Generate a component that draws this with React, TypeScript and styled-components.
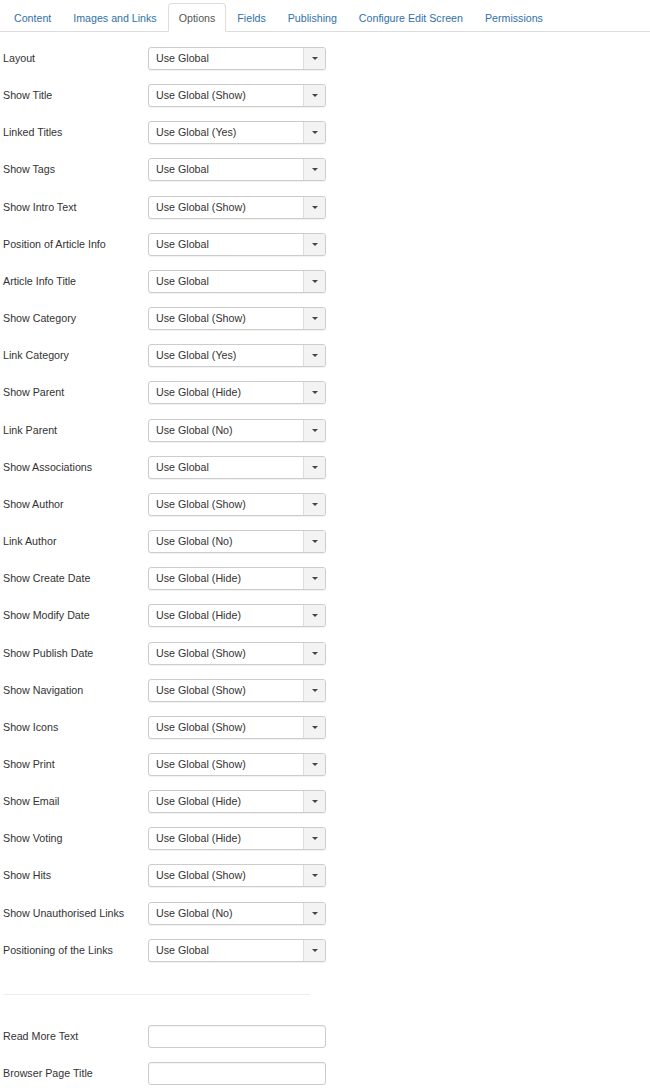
import React from "react";
import styled, { createGlobalStyle } from "styled-components";

const Global = createGlobalStyle`
  html, body { margin: 0; padding: 0; background: #fff; }
  body { font-family: "Liberation Sans", Arial, sans-serif; color: #333; }
  * { box-sizing: border-box; }
`;

const Page = styled.div`
  width: 650px;
  padding-top: 3px;
`;

const Tabs = styled.ul`
  display: flex;
  list-style: none;
  margin: 0;
  padding: 0 0 0 3px;
  border-bottom: 1px solid #ddd;
`;

const Tab = styled.li<{ $active?: boolean }>`
  margin-bottom: -1px;
  padding: 0 10px;
  height: 29px;
  line-height: 28px;
  font-size: 10.65px;
  border: 1px solid ${(p) => (p.$active ? "#ddd" : "transparent")};
  border-bottom-color: ${(p) => (p.$active ? "#fff" : "transparent")};
  border-radius: 4px 4px 0 0;
  background: ${(p) => (p.$active ? "#fff" : "transparent")};
  color: ${(p) => (p.$active ? "#555" : "#3071a9")};
  cursor: pointer;
`;

const Body = styled.div`
  padding-left: 3px;
`;

const Form = styled.div<{ $top?: number }>`
  display: grid;
  grid-template-columns: 145px 178px;
  row-gap: 14.17px;
  padding-top: ${(p) => p.$top ?? 15}px;
`;

const Label = styled.label`
  font-size: 10.7px;
  line-height: 23px;
  color: #333;
`;

const Select = styled.div`
  display: flex;
  height: 23px;
  border: 1px solid #ccc;
  border-radius: 3px;
  box-shadow: 0 1px 1px rgba(0, 0, 0, 0.06);
  background: #fff;
  overflow: hidden;
`;

const SelectValue = styled.span`
  flex: 1;
  padding-left: 7px;
  font-size: 10.7px;
  line-height: 21px;
  color: #333;
`;

const SelectButton = styled.span`
  width: 22px;
  border-left: 1px solid #ddd;
  background: #f3f3f3;
  display: flex;
  align-items: center;
  justify-content: center;
`;

const Caret = styled.span`
  width: 0;
  height: 0;
  border-left: 3px solid transparent;
  border-right: 3px solid transparent;
  border-top: 3px solid #444;
`;

const Separator = styled.hr`
  border: 0;
  border-top: 1px solid #eee;
  width: 307px;
  margin: 32px 0 30px;
`;

const TextInput = styled.input`
  height: 23px;
  width: 178px;
  border: 1px solid #ccc;
  border-radius: 3px;
  box-shadow: inset 0 1px 1px rgba(0, 0, 0, 0.05);
  padding: 0 6px;
  font: inherit;
  font-size: 10.7px;
`;

const tabs = [
  "Content",
  "Images and Links",
  "Options",
  "Fields",
  "Publishing",
  "Configure Edit Screen",
  "Permissions",
];

const rows: [string, string][] = [
  ["Layout", "Use Global"],
  ["Show Title", "Use Global (Show)"],
  ["Linked Titles", "Use Global (Yes)"],
  ["Show Tags", "Use Global"],
  ["Show Intro Text", "Use Global (Show)"],
  ["Position of Article Info", "Use Global"],
  ["Article Info Title", "Use Global"],
  ["Show Category", "Use Global (Show)"],
  ["Link Category", "Use Global (Yes)"],
  ["Show Parent", "Use Global (Hide)"],
  ["Link Parent", "Use Global (No)"],
  ["Show Associations", "Use Global"],
  ["Show Author", "Use Global (Show)"],
  ["Link Author", "Use Global (No)"],
  ["Show Create Date", "Use Global (Hide)"],
  ["Show Modify Date", "Use Global (Hide)"],
  ["Show Publish Date", "Use Global (Show)"],
  ["Show Navigation", "Use Global (Show)"],
  ["Show Icons", "Use Global (Show)"],
  ["Show Print", "Use Global (Show)"],
  ["Show Email", "Use Global (Hide)"],
  ["Show Voting", "Use Global (Hide)"],
  ["Show Hits", "Use Global (Show)"],
  ["Show Unauthorised Links", "Use Global (No)"],
  ["Positioning of the Links", "Use Global"],
];

export default function App() {
  return (
    <Page>
      <Global />
      <Tabs>
        {tabs.map((t) => (
          <Tab key={t} $active={t === "Options"}>
            {t}
          </Tab>
        ))}
      </Tabs>
      <Body>
        <Form>
          {rows.map(([l, v]) => (
            <React.Fragment key={l}>
              <Label>{l}</Label>
              <Select>
                <SelectValue>{v}</SelectValue>
                <SelectButton>
                  <Caret />
                </SelectButton>
              </Select>
            </React.Fragment>
          ))}
        </Form>
        <Separator />
        <Form $top={0}>
          <Label>Read More Text</Label>
          <TextInput type="text" />
          <Label>Browser Page Title</Label>
          <TextInput type="text" />
        </Form>
      </Body>
    </Page>
  );
}
